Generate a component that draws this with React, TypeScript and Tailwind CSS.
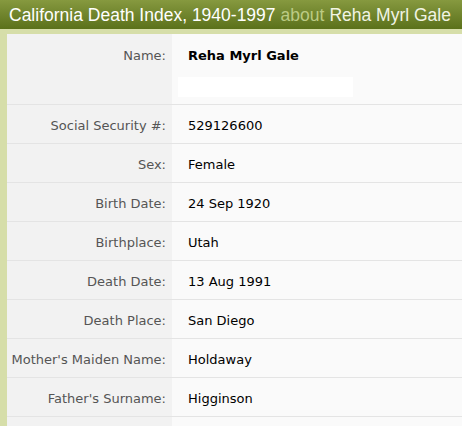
const rows = [
  ["Social Security #:", "529126600"],
  ["Sex:", "Female"],
  ["Birth Date:", "24 Sep 1920"],
  ["Birthplace:", "Utah"],
  ["Death Date:", "13 Aug 1991"],
  ["Death Place:", "San Diego"],
  ["Mother's Maiden Name:", "Holdaway"],
  ["Father's Surname:", "Higginson"],
  ["", ""],
]

const App = () => {
  return (
    <div className="w-[462px] h-[426px] overflow-hidden bg-white font-['DejaVu_Sans',Verdana,sans-serif]">
      <div className="h-[29px] bg-gradient-to-b from-[#86993f] to-[#5b711a] flex items-center pl-[9px] pt-[1px] text-[17.5px] whitespace-nowrap font-['Liberation_Sans',Arial,sans-serif]">
        <span className="text-white">California Death Index, 1940-1997</span>
        <span className="text-[#bccb84] ml-[5px]">about</span>
        <span className="text-[#f1f4e4] ml-[5px]">Reha Myrl Gale</span>
      </div>
      <div className="h-[5px] bg-[#d6dea9]" />
      <div className="border-l-[7px] border-[#d6dea9] text-[13px]">
        <div className="flex h-[71px] border-b border-[#e4e4e4]">
          <div className="w-[165px] bg-[#f2f2f2] text-right pr-[6px] pt-[12px] text-[#555]">Name:</div>
          <div className="flex-1 bg-[#fafafa] pl-[16px] pt-[12px]">
            <div className="font-bold text-black">Reha Myrl Gale</div>
            <div className="mt-[11px] -ml-[10px] w-[175px] h-[20px] bg-white" />
          </div>
        </div>
        {rows.map(([label, value], i) => (
          <div key={i} className="flex h-[39px] border-b border-[#e4e4e4]">
            <div className="w-[165px] bg-[#f2f2f2] pr-[6px] pt-[3px] flex items-center justify-end text-[#555]">{label}</div>
            <div className="flex-1 bg-[#fafafa] pl-[16px] pt-[3px] flex items-center text-black">{value}</div>
          </div>
        ))}
      </div>
    </div>
  )
}

export default App
